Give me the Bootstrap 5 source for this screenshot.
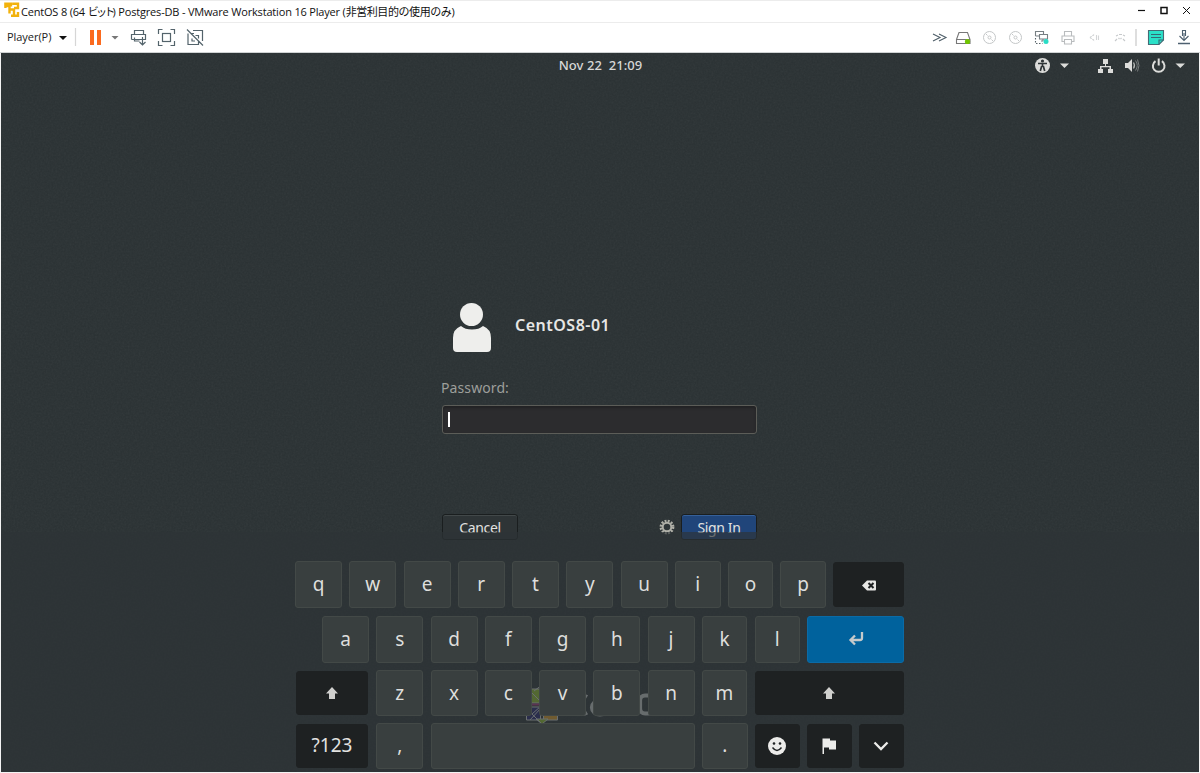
<!DOCTYPE html>
<html lang="ja">
<head>
<meta charset="utf-8">
<meta name="viewport" content="width=device-width, initial-scale=1">
<title>CentOS 8 - VMware Workstation 16 Player</title>
<link href="https://cdn.jsdelivr.net/npm/bootstrap@5.3.0/dist/css/bootstrap.min.css" rel="stylesheet">
<style>
  html, body { height: 773px; overflow: hidden; }
  body { background: #f3f3f3; font-family: "Noto Sans", "Noto Sans CJK JP", sans-serif; }
  svg { display: block; flex: none; }
  .titlebar { height: 23px; padding: 0 0 0 4px; background: #fff; border-top: 1px solid #ececec; border-bottom: 1px solid #ececec; font: 11px/21px "Open Sans", "Noto Sans CJK JP", sans-serif; color: #111; }
  .win-title { letter-spacing: -.18px; }
  .kana { letter-spacing: -2.7px; }
  .kanji { letter-spacing: -.42px; }
  .toolbar { height: 30px; padding-left: 7px; background: #fff; border-bottom: 1px solid #d0d3d4; font: 11px/28px "Open Sans", sans-serif; color: #222; }
  .player-menu { width: 48px; letter-spacing: -.05px; }
  .guest { height: 719px; margin: 0 1px; background: #2a3133; color: #eeeeec; position: relative; overflow: hidden; }
  .grain { position: absolute; inset: 0; opacity: .06; }
  .topbar { height: 25px; position: relative; }
  .clock { font-size: 13px; font-weight: 500; line-height: 25px; letter-spacing: .05px; margin-left: 1px; color: #d8d8d6; }
  .login { width: 315px; margin: 225px auto 0 441px; position: relative; }
  .login-head { height: 49px; margin-left: -1px; }
  .user-name { font-size: 16px; font-weight: 600; line-height: 20px; margin: -6px 0 0 24px; letter-spacing: .5px; color: #e6e6e4; }
  .pw-label { font-size: 14px; line-height: 20px; margin: 26px 0 0 -1px; letter-spacing: .1px; color: #9d9f9b; }
  .entry { height: 29px; margin-top: 7px; padding: 6px 0 0 5px; background: #2c2c2e; border: 1px solid #5c5d58; border-radius: 3px; box-shadow: inset 0 2px 3px rgba(0,0,0,.25); }
  .caret { width: 2px; height: 15px; background: #fff; }
  .actions { margin-top: 80px; }
  .dlg { height: 26px; width: 76px; padding: 0; font-size: 14px; letter-spacing: -.35px; line-height: 23px; color: #e2e2e0; border: 1px solid #1a1e1f; border-radius: 3px; background: #2e3436; box-shadow: inset 0 1px #424849; text-align: center; }
  .dlg-primary { background: #20457a; box-shadow: inset 0 1px #356099; }
  .osk { position: absolute; left: 0; right: 0; bottom: 0; height: 240px; background: rgba(46,52,54,.66); padding: 29px 0 0 294px; }
  .krow { display: grid; column-gap: 7.25px; align-items: center; }
  .r1 { grid-template-columns: repeat(7,47px) 46px 45px 45.5px 70.5px; height: 47px; }
  .r2 { grid-template-columns: repeat(7,47px) 45.5px 45.5px 97px; height: 47px; margin: 7.5px 0 0 27px; }
  .r3 { grid-template-columns: 74px repeat(6,47px) 45.5px 149px; height: 46px; margin-top: 7.5px; }
  .r4 { grid-template-columns: 74px 47px 264px 45.5px 45px 44.5px 44.500px; column-gap: 7.350px; height: 45.5px; margin-top: 7px; }
  .key { height: 100%; display: flex; align-items: center; justify-content: center; background: #393f3f; border: 1px solid #434947; border-radius: 3px; font-size: 19px; line-height: 1; color: #dededc; }
  .key-dark { height: calc(100% - 2px); background: #1e2122; border-color: #1e2122; color: #e2e2e0; }
  .r3 .key-dark:first-child, .r4 .key-dark:first-child { margin-left: 1px; margin-right: 1px; }
  .key-enter { background: #00629d; border-color: #0b6ba6; }
  .distro { position: absolute; left: 525px; top: 632px; }
</style>
</head>
<body>
<header class="titlebar d-flex">
  <svg width="16" height="18" viewBox="0 -.5 16 18" fill="none" stroke="#f2b20c" stroke-width="2.400"><path d="M1.400 6.500V2.200H7V5M1 4.500H5.500V8M9.500 3.500V2.200H14V6.500H10M5 8H10V11M5.500 8V12M10 9V14.200H14V10.500M7 14.200H10"/></svg>
  <span class="win-title text-nowrap">&#8202;CentOS 8 (64 <span class="kana">ビット</span>) Postgres-DB - VMware Workstation 16 Player (<span class="kanji">非営利目的の使用のみ</span>)</span>
  <svg class="ms-auto" width="64" height="20" viewBox="1136 1 64 20" fill="none" stroke="#111" stroke-width="1.2"><path d="M1138 10.500h7"/><rect x="1161" y="7.500" width="6" height="6" stroke-width="1.500"/><path d="M1183 7l7 7M1190 7l-7 7" stroke-width="1"/></svg>
</header>

<nav class="toolbar d-flex">
  <span class="player-menu">Player(P)</span>
  <svg width="160" height="29" viewBox="55 23 160 29" fill="none" stroke="#53636b" stroke-width="1.2">
    <path d="M59 36h8l-4 4z" fill="#111" stroke="none"/>
    <path d="M75.500 28v18" stroke="#d6d6d6"/>
    <path d="M90 30h4v15h-4zM97 30h4v15h-4z" fill="#fb6a1e" stroke="none"/>
    <path d="M111.500 36h7l-3.500 3.500z" fill="#777" stroke="none"/>
    <path d="M134.500 34.500v-4h9v4M131.500 39.500v-5h14v5h-14M134.500 37.500v3.500h5M142.500 37v8M139.500 42l3 3 3-3"/>
    <path d="M158.500 34v-4.500h4M170.500 29.500h4V34M174.500 41v4.500h-4M162.500 45.500h-4V41"/><rect x="162.500" y="33.500" width="8" height="8"/>
    <path d="M188 33.500v11h10.500v-3M193 30.500h9.500V41M191 33.500h3M187 29.500l16 16M195.500 35.500h3v3M192 38.500v2.500h3"/>
  </svg>
  <svg class="ms-auto" width="270" height="29" viewBox="930 23 270 29" fill="none" stroke="#59656b" stroke-width="1.1">
    <path d="M933 34l7 3.500-7 3.500M939 34l7 3.500-7 3.500" stroke="#4e5e68"/>
    <path d="M956.500 39.500l2.500-7h8.500l2.500 7v4h-13.500zM957 39.500h13" stroke="#777"/><circle cx="967.500" cy="41.500" r="2.600" fill="#70c500" stroke="none"/>
    <g stroke="#c4c7c8" stroke-width="1"><circle cx="989.500" cy="37.500" r="6"/><circle cx="989.500" cy="37.500" r="1.500"/><path d="M986 34l1.500 1.500M991.500 39.500l1.500 1.500"/>
    <circle cx="1015.500" cy="37.500" r="6"/><circle cx="1015.500" cy="37.500" r="1.500"/><path d="M1012 34l1.500 1.500M1017.500 39.500l1.500 1.500"/></g>
    <path d="M1035.500 36v-4.500h8V34M1035.500 36h4M1039.500 34.500h8V39h-8zM1041 41h2M1043 39v2" stroke="#777f83"/><path d="M1035.500 38v5.500h7" stroke-dasharray="1.500 1.500"/><circle cx="1046" cy="41.500" r="2.500" fill="#29dcc5" stroke="none"/>
    <path d="M1064.500 36v-4.500h7V36M1064 41.500h-2V36h12v5.500h-2M1064.500 39.500h7v4.500h-7z" stroke="#b9bcbe"/>
    <path d="M1090 37.500l5-3.500M1090 37.500l5 3.500" stroke="#c8cbcd" stroke-dasharray="2 1"/><path d="M1096.500 35v5M1098.500 35.500v4.500" stroke="#d3d5d6"/>
    <path d="M1115 41l2-2M1125 41l-2-2M1116 36l2-1M1119 34.500h3M1123 35l2 1M1118.500 38l1 1M1121.500 38l-1 1" stroke="#c6c9cb"/>
    <path d="M1136 29v17" stroke="#d3d3d3" stroke-width="1.500"/>
    <path d="M1148.500 30.500h15V40l-4.500 4.500h-10.500z" fill="#2be0c8" stroke="#466b75"/><path d="M1163.500 40h-4.500v4.500M1151 34.500h10M1151 37.500h10" stroke="#356976"/>
    <path d="M1184 33v7M1179.500 36l4.500 4.500 4.500-4.500M1182.500 36v-5.500h3V36" stroke="#4d6070"/><path d="M1178 43.500h12" stroke="#4d6070" stroke-width="1.500"/>
  </svg>
</nav>

<main class="guest">
  <svg class="grain" width="1198" height="719"><filter id="n"><feTurbulence type="fractalNoise" baseFrequency=".55" numOctaves="2" seed="4"/><feColorMatrix type="saturate" values="0"/></filter><rect width="1198" height="719" filter="url(#n)"/></svg>

  <div class="topbar d-flex justify-content-center">
    <span class="clock" style="white-space:pre">Nov 22  21:09</span>
    <svg class="position-absolute end-0 top-0" width="170" height="25" viewBox="1029 53 170 25" fill="#dcdcda">
      <circle cx="1042.500" cy="65.500" r="7.500"/><circle cx="1042.500" cy="61" r="1.600" fill="#2e3436"/><path d="M1038 63.500h9M1042.500 63v4M1041.700 66l-1.400 5M1043.300 66l1.400 5" fill="none" stroke="#2e3436" stroke-width="1.700"/>
      <path d="M1060 63.500h9l-4.500 4.500zM1175.500 63.500h9.500l-4.700 4.500z"/>
      <path d="M1103 59h5v5h-2v2h5v3h2v4h-5v-4h1.500v-1.700h-8V69h1.500v4h-5v-4h2v-3h5v-2h-2z"/>
      <path d="M1125 63h3l4-4v13l-4-4h-3z"/><path d="M1133.500 62.500q2 3 0 6" fill="none" stroke="#b9bbb9" stroke-width="1.200"/><path d="M1135.500 60.500q3.500 5 0 10M1137.500 59.500q3 6 0 12" fill="none" stroke="#777c7c" stroke-width="1"/>
      <path d="M1155.500 61.200a5.800 5.800 0 1 0 6.400 0" fill="none" stroke="#dcdcda" stroke-width="2"/><path d="M1157.700 58.500h2v7h-2z"/>
    </svg>
  </div>

  <section class="login">
    <div class="login-head d-flex align-items-center">
      <svg width="50" height="50" viewBox="441 303 50 50" fill="#eeeeec"><circle cx="471.500" cy="314.500" r="11.500"/><path d="M461 326q-8 3-8 12v10q0 4 4 4h30q4 0 4-4V338q0-9-8-12q-4 3.500-11 3.500t-11-3.500z"/></svg>
      <span class="user-name">CentOS8-01</span>
    </div>
    <div class="pw-label">Password:</div>
    <div class="entry"><div class="caret"></div></div>
    <div class="actions d-flex align-items-center">
      <button class="dlg">Cancel</button>
      <svg class="ms-auto me-1" width="19" height="18" viewBox="-9 -9 19 18" fill="none" stroke="#b0b0a8"><circle r="4.300" stroke-width="2"/><circle r="6.100" stroke-width="2.600" stroke-dasharray="1.900 1.294"/></svg>
      <button class="dlg dlg-primary">Sign In</button>
    </div>
  </section>

  <svg class="distro" width="150" height="44" viewBox="526 685 150 44">
    <g stroke="#e0e2df" stroke-width="1"><path d="M531 689h12v14h-12z" fill="#9ccd2a"/><path d="M526.500 707h14v13h-14z" fill="#262577"/><path d="M543.500 707h14v13h-14z" fill="#efa724"/><path d="M536 719l6 5 6-5z" fill="#9ccd2a"/><path d="M534 691l8-6M531 692l10 10M541 706l-9 8 9 9M530 720l11-12" fill="none"/></g><path d="M531 704.500h10" stroke="#b23583" stroke-width="2"/>
    <g fill="none" stroke="#d6d8d5" stroke-width="4.200"><path d="M587 697a9 9 0 1 0 0 15.500"/><ellipse cx="600" cy="707.500" rx="8" ry="7"/><rect x="640" y="695.500" width="22" height="18" rx="5"/></g>
  </svg>

  <section class="osk">
    <div class="krow r1">
      <div class="key">q</div><div class="key">w</div><div class="key">e</div><div class="key">r</div><div class="key">t</div><div class="key">y</div><div class="key">u</div><div class="key">i</div><div class="key">o</div><div class="key">p</div>
      <div class="key key-dark"><svg width="18" height="12" viewBox="-2 0 18 11"><path d="M1 6l5-5h8q1 0 1 1v8q0 1-1 1H6z" fill="#e8e8e6"/><path d="M7.500 3.500l5 5M12.500 3.500l-5 5" stroke="#1e2122" stroke-width="2"/></svg></div>
    </div>
    <div class="krow r2">
      <div class="key">a</div><div class="key">s</div><div class="key">d</div><div class="key">f</div><div class="key">g</div><div class="key">h</div><div class="key">j</div><div class="key">k</div><div class="key">l</div>
      <div class="key key-enter"><svg width="16" height="14" viewBox="0 0 16 14" fill="none" stroke="#c5cacb" stroke-width="2.300"><path d="M14 0v6q0 2-2 2H3M7 3.500L2.500 8 7 12.500"/></svg></div>
    </div>
    <div class="krow r3">
      <div class="key key-dark"><svg width="14" height="14" viewBox="0 0 14 14" fill="#d0d0ce"><path d="M7 1l6 6.500h-3V13H4V7.500H1z"/></svg></div>
      <div class="key">z</div><div class="key">x</div><div class="key">c</div><div class="key">v</div><div class="key">b</div><div class="key">n</div><div class="key">m</div>
      <div class="key key-dark"><svg width="14" height="14" viewBox="0 0 14 14" fill="#d0d0ce"><path d="M7 1l6 6.500h-3V13H4V7.500H1z"/></svg></div>
    </div>
    <div class="krow r4">
      <div class="key key-dark">?123</div><div class="key">,</div><div class="key"></div><div class="key">.</div>
      <div class="key key-dark"><svg width="18" height="18" viewBox="0 0 18 18"><circle cx="9" cy="9" r="9" fill="#ececea"/><circle cx="6" cy="6.500" r="1.300" fill="#1e2122"/><circle cx="12" cy="6.500" r="1.300" fill="#1e2122"/><path d="M4.500 10.500q4.500 6 9 0" fill="none" stroke="#1e2122" stroke-width="1.400"/></svg></div>
      <div class="key key-dark"><svg width="14" height="16" viewBox="0 0 14 16" fill="#ececea"><path d="M.5.500H8v2h6v9H7v-2H2V16H.5z"/></svg></div>
      <div class="key key-dark"><svg width="16" height="12" viewBox="0 0 16 12" fill="none" stroke="#ececea" stroke-width="2.300"><path d="M1.500 2.500L8 9l6.500-6.500"/></svg></div>
    </div>
  </section>
</main>
<script src="https://cdn.jsdelivr.net/npm/bootstrap@5.3.0/dist/js/bootstrap.bundle.min.js"></script>
</body>
</html>
